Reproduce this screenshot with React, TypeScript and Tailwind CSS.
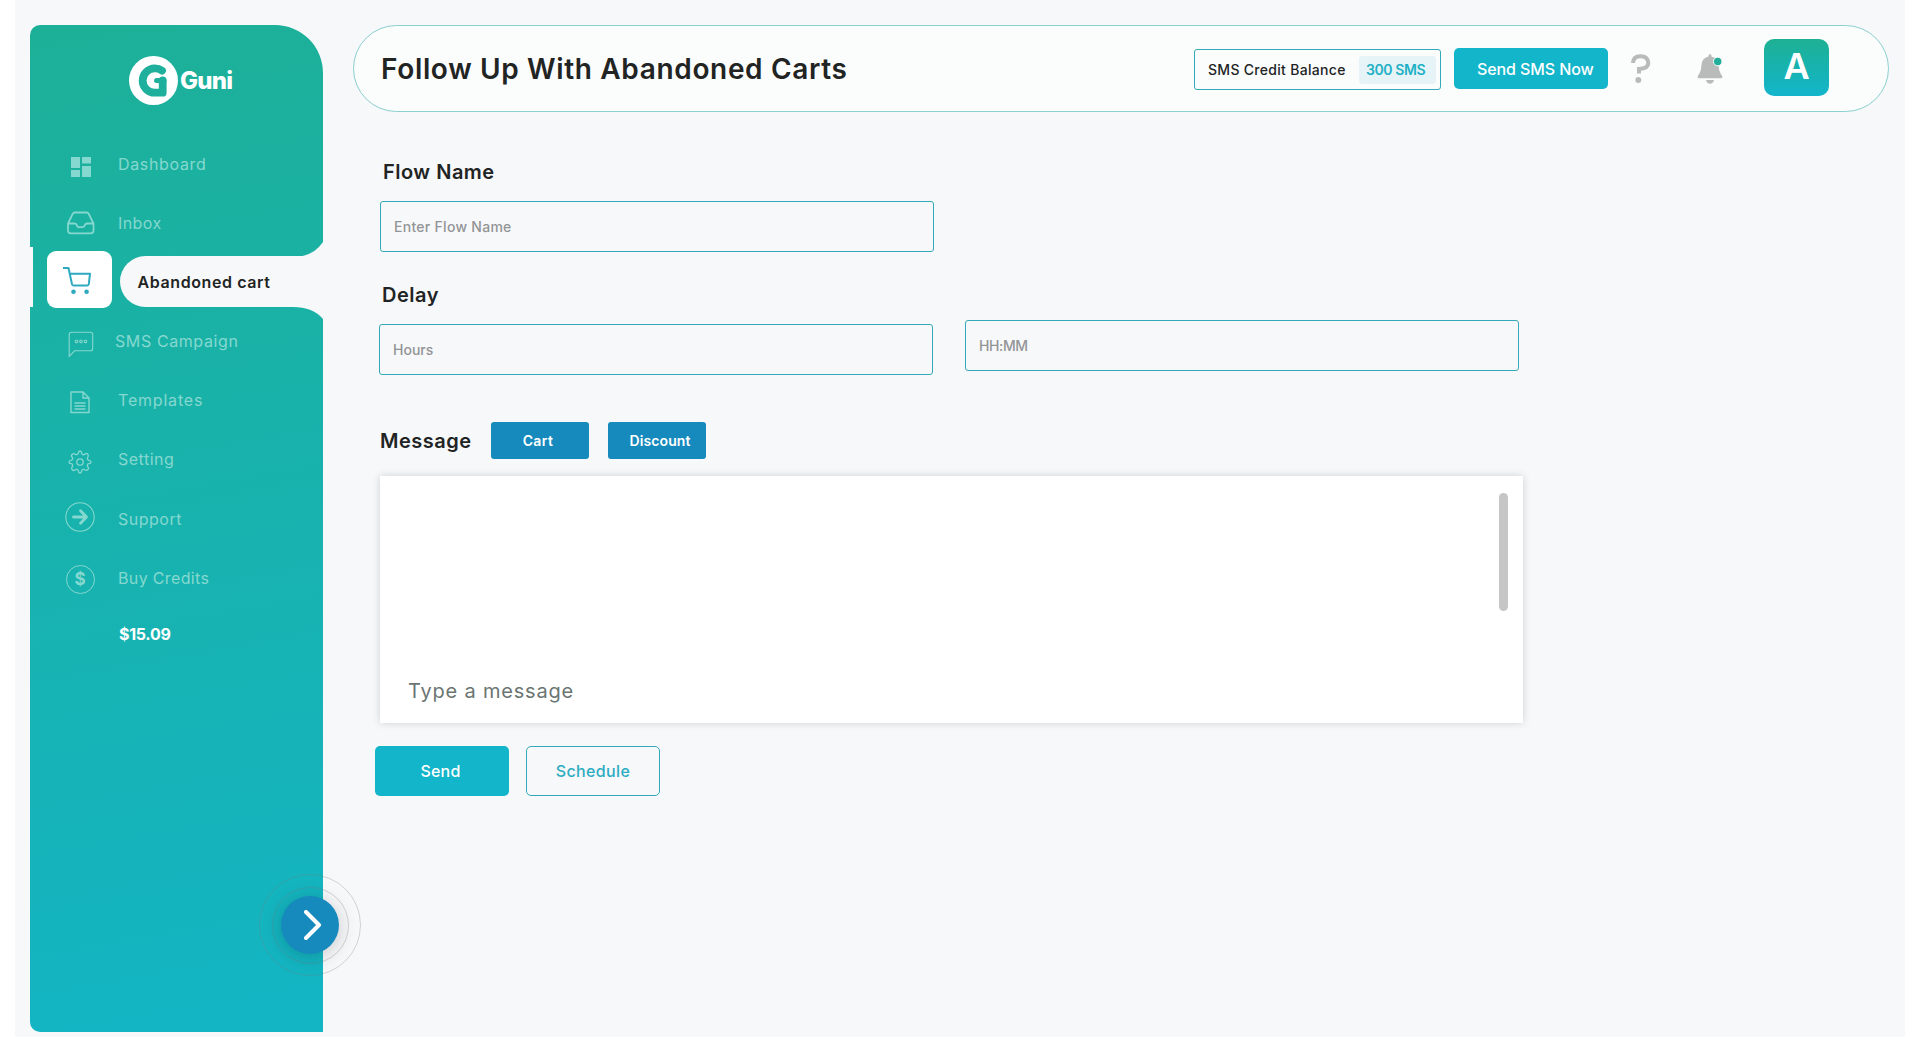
import React from "react";

type LabelProps = { text: string; className: string };
const Label = ({ text, className }: LabelProps) => (
  <span className={`whitespace-nowrap ${className}`}>{text}</span>
);

const Logo = () => (
  <div className="ml-[98px] mt-[30px] flex h-[50px] items-center">
    <svg width="50" height="50" viewBox="0 0 50 50" fill="none" className="shrink-0">
      <circle cx="25.5" cy="25.5" r="24.5" fill="#fff" />
      <path d="M34 15.600Q31 13.400 26.800 13.400A12.150 12.150 0 0 0 26.800 37.700H34.700V25.500" stroke="#1eb09c" strokeWidth="7.800" strokeLinecap="round" strokeLinejoin="round" />
      <path d="M28.500 25.600H36" stroke="#1eb09c" strokeWidth="5" strokeLinecap="round" />
    </svg>
    <Label text="Guni" className="ml-[2px] mt-[2px] text-[24px] font-extrabold leading-[30px] tracking-[-0.8px] text-white" />
  </div>
);

const DashboardIcon = () => (
  <svg width="20" height="20" viewBox="0 0 20 20" fill="currentColor">
    <path d="M0 0h9v11H0zM0 13h9v7H0zM11 0h9v6.500h-9zM11 9h9v11h-9z" />
  </svg>
);
const InboxIcon = () => (
  <svg width="28" height="24" viewBox="0 0 28 24" fill="none" stroke="currentColor" strokeWidth="1.8" strokeLinejoin="round">
    <path d="M1 12.500 5.800 2.600Q6.400 1.500 7.600 1.500H19.800Q21 1.500 21.600 2.600L26.500 12.500V19.500Q26.500 22.300 23.700 22.300H3.800Q1 22.300 1 19.500ZM1 12.500H7.500Q9.500 12.500 10 14.500T12 16.200H15.500Q17 16.200 17.600 14.500T20 12.500H26.500" />
  </svg>
);
const SmsIcon = () => (
  <svg width="26" height="27" viewBox="0 0 26 27" fill="none" stroke="currentColor" strokeWidth="1.1">
    <path d="M1.200 25.300V3.500Q1.200 1.200 3.500 1.200H22.500Q24.700 1.200 24.700 3.500V17.500Q24.700 19.800 22.500 19.800H6.500Z" />
    <rect x="7.300" y="9.200" width="2.400" height="2.400" rx=".8" /><rect x="11.800" y="9.200" width="2.400" height="2.400" rx=".8" /><rect x="16.300" y="9.200" width="2.400" height="2.400" rx=".8" />
  </svg>
);
const TemplateIcon = () => (
  <svg width="20" height="23" viewBox="0 0 20 23" fill="none" stroke="currentColor" strokeWidth="1.4" strokeLinejoin="round">
    <path d="M1 1H13L19 7V21.500H1ZM13 1V7H19M4.500 12H15.500M4.500 15H15.500M4.500 18H15.500" />
  </svg>
);
const GearIcon = () => (
  <svg width="24" height="24" viewBox="0 0 24 24" fill="none" stroke="currentColor" strokeWidth="1.300" strokeLinejoin="round">
    <circle cx="12" cy="12" r="3.200" />
    <path d="M10.300 3.200Q10.500 1 12 1T13.700 3.200Q13.900 4.600 15.100 4.700Q16 4.900 17 4Q18.600 2.800 19.700 4.200T20 7Q19.100 8 19.400 8.900Q19.600 10.100 20.900 10.300Q23 10.500 23 12T20.900 13.700Q19.600 13.900 19.400 15.100Q19.100 16 20 17Q21.200 18.600 19.800 19.700T17 20Q16 19.100 15.100 19.400Q13.900 19.600 13.700 20.900Q13.500 23 12 23T10.300 20.900Q10.100 19.600 8.900 19.400Q8 19.100 7 20Q5.400 21.200 4.300 19.800T4 17Q4.900 16 4.600 15.100Q4.400 13.900 3.100 13.700Q1 13.500 1 12T3.100 10.300Q4.400 10.100 4.600 8.900Q4.900 8 4 7Q2.800 5.400 4.200 4.300T7 4Q8 4.900 8.900 4.600Q10.100 4.400 10.300 3.200Z" />
  </svg>
);
const SupportIcon = () => (
  <svg width="30" height="30" viewBox="0 0 30 30" fill="none" stroke="currentColor">
    <circle cx="15" cy="15" r="14.200" strokeWidth="1.100" />
    <path d="M8.500 15H21M15.500 8.700 21.500 15 15.500 21.300" strokeWidth="2.800" strokeLinecap="round" strokeLinejoin="round" />
  </svg>
);
const CreditsIcon = () => (
  <span className="flex size-[29px] items-center justify-center rounded-full border border-current text-[17px] font-bold leading-none">$</span>
);
const CartIcon = () => (
  <svg width="28" height="27" viewBox="0 0 28 27" fill="none" stroke="#2fa9bf" strokeWidth="2" strokeLinejoin="round">
    <path d="M0 1H5.500L9 17.200Q9.400 18.500 10.800 18.500H24.300Q25.600 18.500 25.800 17.200L27 6.700H7" />
    <circle cx="10.500" cy="24.700" r="2.300" fill="#2fa9bf" stroke="none" /><circle cx="23.600" cy="24.700" r="2.300" fill="#2fa9bf" stroke="none" />
  </svg>
);

type Item = { label: string; icon: React.ReactNode; shift: string; text: string };
const Row = ({ label, icon, shift, text }: Item) => (
  <li className="flex h-[59.17px] items-center text-[#85d8cf]">
    <span className={`ml-[35px] flex w-[30px] justify-center ${shift}`}>{icon}</span>
    <Label text={label} className={`text-[16px] leading-6 ${text}`} />
  </li>
);

const ActiveRow = () => (
  <li className="relative flex h-[59.17px] items-start">
    <span className="mt-[-5px] h-[60px] w-[3px] bg-[#f7f8fa]" />
    <span className="ml-[14px] mt-[-1px] flex h-[57px] w-[65px] items-center justify-center rounded-[9px] bg-white pr-[6px] pt-[2px]">
      <CartIcon />
    </span>
    <span className="ml-[7.500px] mt-[4px] flex h-[51px] flex-1 items-center rounded-l-[26px] bg-[#f7f8f9] pl-[18px]">
      <Label text="Abandoned cart" className="text-[16px] font-semibold tracking-[0.6px] text-[#222424]" />
    </span>
    <svg className="absolute right-0 top-[-10px]" width="30" height="15" viewBox="0 0 30 15"><path d="M30 0V15H0Q20 15 30 0Z" fill="#f7f8f9" /></svg>
    <svg className="absolute right-0 top-[54.500px]" width="30" height="12" viewBox="0 0 30 12"><path d="M30 12V0H0Q20 0 30 12Z" fill="#f7f8f9" /></svg>
  </li>
);

const Sidebar = () => (
  <aside className="relative mt-[25px] h-[1007px] w-[293px] shrink-0 rounded-bl-[10px] rounded-tl-[10px] rounded-tr-[48px] bg-[linear-gradient(170deg,#1db098_0%,#13b5c5_100%)]">
    <Logo />
    <ul className="mt-[29px]">
      <Row label="Dashboard" icon={<DashboardIcon />} shift="mt-[6px] pl-[1px]" text="ml-[23px] tracking-[0.65px]" />
      <Row label="Inbox" icon={<InboxIcon />} shift="pl-[1px]" text="ml-[23px] tracking-[0.4px]" />
      <ActiveRow />
      <Row label="SMS Campaign" icon={<SmsIcon />} shift="mt-[6px] pl-[1px]" text="ml-[20px] tracking-[0.6px]" />
      <Row label="Templates" icon={<TemplateIcon />} shift="mt-[5px]" text="ml-[23px] tracking-[0.8px]" />
      <Row label="Setting" icon={<GearIcon />} shift="mt-[5px]" text="ml-[23px] tracking-[0.5px]" />
      <Row label="Support" icon={<SupportIcon />} shift="mt-[-3px]" text="ml-[23px] tracking-[0.5px]" />
      <Row label="Buy Credits" icon={<CreditsIcon />} shift="mt-[3px]" text="ml-[23px] tracking-[0.35px]" />
    </ul>
    <p className="ml-[89px] mt-[15px] text-[16px] font-bold leading-6 tracking-[-0.3px] text-white">$15.09</p>
    <button aria-label="Expand menu" className="absolute left-[229px] top-[849px] flex size-[102px] items-center justify-center rounded-full border border-[#777]/30">
      <span className="flex size-[77px] items-center justify-center rounded-full border border-[#777]/30">
        <span className="flex size-[58px] items-center justify-center rounded-full bg-[#168abd] shadow-[0_3px_20px_rgba(0,0,0,0.2)]">
          <svg width="18" height="30" viewBox="0 0 18 30" fill="none" stroke="#fff" strokeWidth="4" strokeLinecap="round" strokeLinejoin="round" className="ml-[6px]">
            <path d="M2 2 15 15 2 28" />
          </svg>
        </span>
      </span>
    </button>
  </aside>
);

const Header = () => (
  <header className="flex h-[87px] w-[1536px] items-center rounded-full border border-[#8ccfcf] bg-[#fbfcfc] pl-[27px]">
    <h1 className="w-[813px] shrink-0 whitespace-nowrap text-[28px] font-semibold leading-10 tracking-[0.65px] text-[#222424]">Follow Up With Abandoned Carts</h1>
    <div className="mt-[2px] flex h-[41px] w-[247px] shrink-0 items-center rounded-[3px] border border-[#35a9b9] pl-[13px]">
      <Label text="SMS Credit Balance" className="w-[151px] text-[14px] font-medium tracking-[0.3px] text-[#222424]" />
      <span className="flex h-[28px] w-[77px] items-center rounded-[3px] bg-[#e6f4f8] pl-[7px]">
        <Label text="300 SMS" className="text-[14px] font-semibold tracking-[-0.4px] text-[#22b0c6]" />
      </span>
    </div>
    <button className="ml-[13px] flex h-[41px] w-[154px] shrink-0 items-center rounded-[5px] bg-[#13b5cb] pl-[23px] text-white">
      <Label text="Send SMS Now" className="text-[16px] font-medium tracking-[-0.1px]" />
    </button>
    <svg className="ml-[23px] shrink-0" width="20" height="30" viewBox="0 0 20 30" fill="none">
      <path d="M2 9Q2 2.200 9.500 2.200T17.300 9Q17.300 14.500 8 15V19.500" stroke="#b9bbbb" strokeWidth="4" />
      <circle cx="7.300" cy="26" r="3" fill="#b9bbbb" />
    </svg>
    <svg className="ml-[46px] shrink-0" width="26" height="30" viewBox="0 0 26 30">
      <path d="M13 0Q14.500 0 14.700 2.700Q21.500 4 21.700 12Q21.900 18 25 21.500Q26 24.200 24 24.200H2Q0 24.200 1 21.500Q4.100 18 4.300 12Q4.500 4 11.300 2.700Q11.500 0 13 0ZM9 26H17Q16 29.800 13 29.800T9 26Z" fill="#b9bbbb" />
      <circle cx="20.700" cy="7.500" r="4.300" fill="#22ae9a" stroke="#fbfcfc" />
    </svg>
    <div className="ml-[41px] mt-[-3px] flex h-[57px] w-[65px] shrink-0 items-center justify-center rounded-[10px] bg-linear-to-b from-[#1eb093] to-[#13b5cb] pb-[2px] text-[36px] font-semibold text-white">A</div>
  </header>
);

const field = "block h-[51px] w-[554px] rounded-[3px] border border-[#35a9b9] bg-transparent pl-[13px] text-[14px] font-medium text-[#222424] outline-none placeholder:text-[#929496]";
const heading = "text-[20px] font-semibold leading-[30px] tracking-[0.5px] text-[#222424]";

const FlowForm = () => (
  <main className="pl-[22px]">
    <label className={`mt-[45px] block pl-[8px] ${heading}`}>Flow Name</label>
    <input placeholder="Enter Flow Name" className={`ml-[5px] mt-[14px] tracking-[0.28px] ${field}`} />
    <label className={`mt-[28px] block pl-[7px] ${heading}`}>Delay</label>
    <div className="ml-[4px] mt-[10px] flex items-start gap-[32px]">
      <input placeholder="Hours" className={`mt-[4px] ${field}`} />
      <input placeholder="HH:MM" className={`tracking-[-0.4px] ${field}`} />
    </div>
    <div className="ml-[5px] mt-[47px] flex h-[37px] items-center">
      <h2 className={`w-[111px] ${heading}`}>Message</h2>
      <button className="h-[37px] w-[98px] rounded-[3px] bg-[#168abd] pr-[4px] text-[14px] font-semibold tracking-[0.4px] text-white">Cart</button>
      <button className="ml-[19px] h-[37px] w-[98px] rounded-[3px] bg-[#168abd] pl-[6px] text-[14px] font-semibold tracking-[0.1px] text-white">Discount</button>
    </div>
    <section className="ml-[5px] mt-[17px] flex h-[247px] w-[1143px] items-end justify-between bg-white pl-[28px] pr-[15px] shadow-[0_0_8px_rgba(0,0,0,0.16)]">
      <p className="mb-[17px] whitespace-nowrap text-[20px] leading-[30px] tracking-[0.8px] text-[#6b7572]">Type a message</p>
      <span className="mt-[17px] h-[118px] w-[9px] self-start rounded-full bg-[#c6c6c6]" />
    </section>
    <div className="mt-[23px] flex gap-[17px] text-[16px] font-medium">
      <button className="h-[50px] w-[134px] rounded-[5px] bg-[#13b5cb] pr-[3px] tracking-[0.25px] text-white">Send</button>
      <button className="h-[50px] w-[134px] rounded-[5px] border border-[#35a9b9] tracking-[0.35px] text-[#2cacc2]">Schedule</button>
    </div>
  </main>
);

export default function App() {
  return (
    <div className="h-[1059px] w-[1920px] overflow-hidden bg-white px-[15px] font-['Inter',sans-serif]">
      <div className="flex h-[1037px] bg-[#f7f8fa] pl-[15px]">
        <Sidebar />
        <div className="ml-[30px] mt-[25px]">
          <Header />
          <FlowForm />
        </div>
      </div>
    </div>
  );
}
